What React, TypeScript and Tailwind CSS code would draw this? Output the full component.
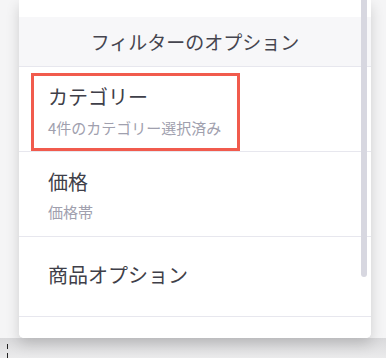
import React from "react";

const font = { fontFamily: '"Noto Sans CJK JP", "Noto Sans", sans-serif' };

export default function App() {
  return (
    <div
      className="relative w-[386px] h-[358px] overflow-hidden bg-[#f5f5f6] flex flex-col"
      style={font}
    >
      <div className="relative z-10 ml-[19px] w-[352px] h-[338px] shrink-0 bg-white rounded-b-[5px] shadow-[0_6px_14px_rgba(0,0,0,0.16)] overflow-hidden flex flex-col">
        <div className="h-[17px] shrink-0 bg-white" />
        <div className="h-[50px] shrink-0 bg-[#f7f7f9] border-b border-[#e7e7ee] flex items-center justify-center text-[19px] leading-[24px] text-[#45454f]">
          フィルターのオプション
        </div>
        <div className="h-[85px] shrink-0 border-b border-[#e7e7ee] pl-[29px] pt-[18px] flex flex-col">
          <div className="text-[20px] leading-[24px] text-[#3f3f49]">カテゴリー</div>
          <div className="mt-[9px] text-[15px] leading-[20px] text-[#a0a0ae]">4件のカテゴリー選択済み</div>
        </div>
        <div className="h-[85px] shrink-0 border-b border-[#e7e7ee] pl-[29px] pt-[18px] flex flex-col">
          <div className="text-[20px] leading-[24px] text-[#3f3f49]">価格</div>
          <div className="mt-[8px] text-[15px] leading-[20px] text-[#a0a0ae]">価格帯</div>
        </div>
        <div className="h-[80px] shrink-0 border-b border-[#e7e7ee] pl-[29px] pt-[26px]">
          <div className="text-[20px] leading-[24px] text-[#3f3f49]">商品オプション</div>
        </div>
        <div className="flex-1 bg-white" />

        <div className="absolute right-[4px] top-0 w-[6px] h-[277px] rounded-b-full bg-[#d7d7e0]" />
        <div className="absolute left-[12px] top-[73px] w-[209px] h-[78px] border-[3px] border-[#f15b4d]" />
      </div>
      <div className="relative flex-1 bg-gradient-to-b from-[#d9d9db] to-[#ebebec]">
        <div className="absolute left-[7px] top-[6px] w-[1px] h-[5px] bg-[#222]" />
        <div className="absolute left-[7px] top-[15px] w-[1px] h-[5px] bg-[#222]" />
      </div>
    </div>
  );
}
